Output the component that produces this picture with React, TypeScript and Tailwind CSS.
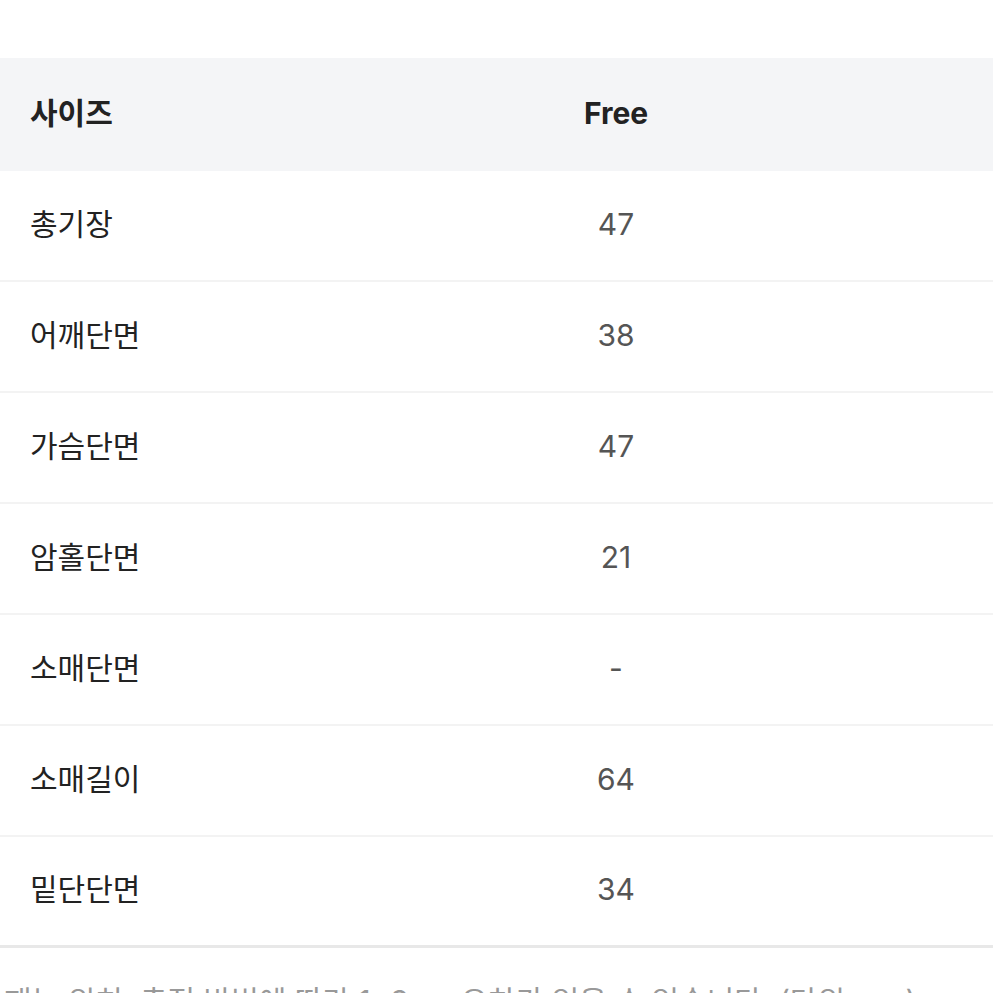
const rows: [string, string][] = [
  ["총기장", "47"],
  ["어깨단면", "38"],
  ["가슴단면", "47"],
  ["암홀단면", "21"],
  ["소매단면", "-"],
  ["소매길이", "64"],
  ["밑단단면", "34"],
];

export default function App() {
  return (
    <div
      className="w-[993px] h-[993px] overflow-hidden bg-white pt-[58px]"
      style={{ fontFamily: 'Inter, "Noto Sans CJK KR", sans-serif' }}
    >
      <div className="border-b-[3px] border-[#e8e8e8]">
        <div className="grid grid-cols-[239px_1fr] h-[113px] items-center pb-[2px] bg-[#f4f5f7] text-[30px] font-bold text-[#222]">
          <div className="pl-[30px]">사이즈</div>
          <div className="text-center">Free</div>
        </div>
        {rows.map(([label, value], i) => (
          <div
            key={label}
            className={
              i < rows.length - 1
                ? "grid grid-cols-[239px_1fr] h-[111px] items-center pb-[3px] border-b-2 border-[#f3f3f3] text-[30px]"
                : "grid grid-cols-[239px_1fr] h-[108px] items-center pb-[3px] text-[30px]"
            }
          >
            <div className="pl-[30px] text-[#222]">{label}</div>
            <div className="text-center text-[#555]">{value}</div>
          </div>
        ))}
      </div>
      <p className="mt-[31px] pl-[4px] whitespace-nowrap text-[30px] text-[#999]">
        재는 위치, 측정 방법에 따라 1~3cm 오차가 있을 수 있습니다. (단위: cm)
      </p>
    </div>
  );
}
